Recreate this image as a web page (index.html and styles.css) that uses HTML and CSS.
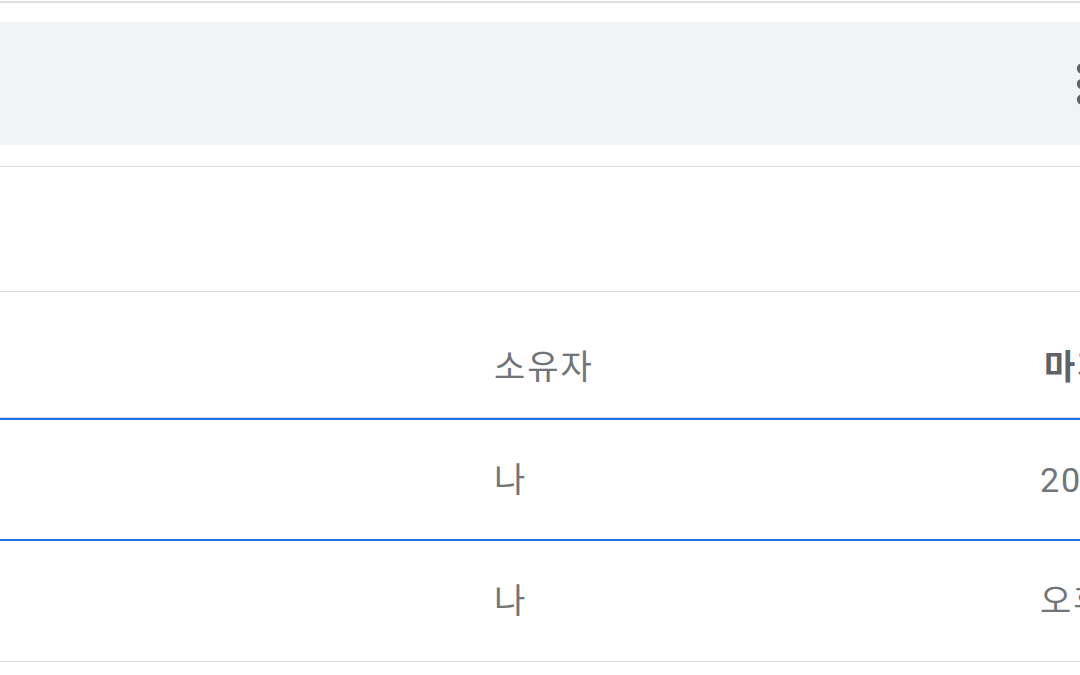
FILE: index.html
```html
<!DOCTYPE html>
<html lang="ko">
<head>
    <meta charset="UTF-8">
    <meta name="viewport" content="width=device-width, initial-scale=1.0">
    <title>내 드라이브</title>
    <link rel="stylesheet" href="styles.css">
</head>
<body>
    <div class="top-rule"></div>

    <div class="search-band">
        <button class="more-btn" aria-label="더보기">
            <svg viewBox="0 0 24 24" width="62" height="62">
                <circle cx="12" cy="6" r="2"></circle>
                <circle cx="12" cy="12" r="2"></circle>
                <circle cx="12" cy="18" r="2"></circle>
            </svg>
        </button>
    </div>

    <div class="filters"></div>

    <div class="file-list">
        <div class="row head">
            <div class="cell name"></div>
            <div class="cell owner">소유자</div>
            <div class="cell modified sorted">마지막으로 수정한 날짜</div>
        </div>
        <div class="row selected">
            <div class="cell name"></div>
            <div class="cell owner">나</div>
            <div class="cell modified">2023. 5. 12. 나</div>
        </div>
        <div class="row">
            <div class="cell name"></div>
            <div class="cell owner">나</div>
            <div class="cell modified">오후 3:24 나</div>
        </div>
    </div>
</body>
</html>
```

FILE: styles.css
```css
body {
    margin: 0;
    padding: 0;
    background-color: #fff;
    font-family: Roboto, "Noto Sans CJK KR", sans-serif;
    color: #70757a;
    overflow: hidden;
}

.top-rule {
    height: 1px;
    border-bottom: 2px solid #e0e0e0;
}

.search-band {
    margin-top: 19px;
    height: 123px;
    background-color: #f1f3f4; /* light grey search bar */
    display: flex;
    align-items: center;
    justify-content: flex-end;
}

.more-btn {
    border: 0;
    padding: 0;
    background: none;
    display: flex;
    margin-right: -33px;
}

.more-btn svg {
    fill: #5f6368;
}

.filters {
    margin-top: 21px;
    height: 124px;
    border-top: 1px solid #dadce0;
    border-bottom: 1px solid #dadce0;
}

.row {
    display: grid;
    grid-template-columns: 494px 546px 1fr;
    align-items: center;
    height: 120px;
    border-bottom: 1px solid #dadce0;
    font-size: 34px;
    line-height: 48px;
    letter-spacing: 2px;
}

.row.head {
    height: 101px;
    padding-top: 24px;
}

.row.selected {
    height: 119px;
    border-top: 2px solid #1a73e8;
    border-bottom: 2px solid #1a73e8;
}

.cell {
    white-space: nowrap;
    overflow: hidden;
}

.sorted {
    padding-left: 4px;
    font-weight: bold;
    color: #5f6368;
}
```
